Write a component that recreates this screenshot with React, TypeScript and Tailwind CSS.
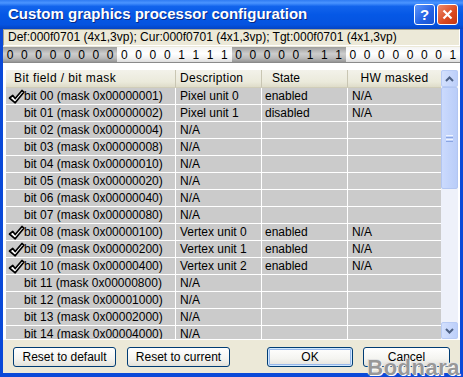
const rows = [
  { bit: "00", mask: "00000001", desc: "Pixel unit 0", state: "enabled", hw: "N/A", on: true },
  { bit: "01", mask: "00000002", desc: "Pixel unit 1", state: "disabled", hw: "N/A", on: false },
  { bit: "02", mask: "00000004", desc: "N/A", state: "", hw: "", on: false },
  { bit: "03", mask: "00000008", desc: "N/A", state: "", hw: "", on: false },
  { bit: "04", mask: "00000010", desc: "N/A", state: "", hw: "", on: false },
  { bit: "05", mask: "00000020", desc: "N/A", state: "", hw: "", on: false },
  { bit: "06", mask: "00000040", desc: "N/A", state: "", hw: "", on: false },
  { bit: "07", mask: "00000080", desc: "N/A", state: "", hw: "", on: false },
  { bit: "08", mask: "00000100", desc: "Vertex unit 0", state: "enabled", hw: "N/A", on: true },
  { bit: "09", mask: "00000200", desc: "Vertex unit 1", state: "enabled", hw: "N/A", on: true },
  { bit: "10", mask: "00000400", desc: "Vertex unit 2", state: "enabled", hw: "N/A", on: true },
  { bit: "11", mask: "00000800", desc: "N/A", state: "", hw: "", on: false },
  { bit: "12", mask: "00001000", desc: "N/A", state: "", hw: "", on: false },
  { bit: "13", mask: "00002000", desc: "N/A", state: "", hw: "", on: false },
  { bit: "14", mask: "00004000", desc: "N/A", state: "", hw: "", on: false },
];

const bits = "00000000000011110000011100000001".split("");

function Check() {
  return (
    <svg width="17" height="15" viewBox="0 0 17 15" className="shrink-0">
      <path
        d="M1.5 9 L4.8 6.5 L7.2 9.5 L14 1.5 L15.8 3.2 L7.2 13.8 Z"
        fill="#ffffff"
        stroke="#000000"
        strokeWidth="1.7"
        strokeLinejoin="round"
      />
    </svg>
  );
}

function XpButton({ label, width, isDefault }: { label: string; width: string; isDefault?: boolean }) {
  return (
    <div
      className={`${width} h-[20px] rounded-[3px] border border-[#003c74] bg-[linear-gradient(to_bottom,#ffffff_0%,#f4f4f0_60%,#e3e2da_100%)] flex items-center justify-center text-[12px] text-black ${
        isDefault ? "shadow-[inset_0_0_0_1px_#cee7ff,inset_0_0_0_2px_#98b8ea]" : ""
      }`}
    >
      {label}
    </div>
  );
}

function ScrollArrow({ up }: { up: boolean }) {
  return (
    <div className="h-[17px] w-[17px] rounded-[2px] border border-[#b8cbf5] bg-[linear-gradient(to_right,#d3e0fd,#bccffa)] flex items-center justify-center">
      <svg width="9" height="6" viewBox="0 0 9 6">
        <path
          d={up ? "M1 5 L4.5 1.5 L8 5" : "M1 1 L4.5 4.5 L8 1"}
          fill="none"
          stroke="#4d6185"
          strokeWidth="2"
        />
      </svg>
    </div>
  );
}

export default function App() {
  return (
    <div className="w-[463px] h-[377px] flex flex-col bg-[#0a49d8] font-['Liberation_Sans',Arial,sans-serif] relative overflow-hidden">
      {/* title bar */}
      <div className="h-[29px] shrink-0 flex items-center justify-between pl-[8px] pr-[5px] bg-[linear-gradient(to_bottom,#2f7bf2_0%,#4b95ff_10%,#1264ec_22%,#0558e6_50%,#0553e0_85%,#0444c4_100%)]">
        <span className="text-white font-bold text-[15px] [text-shadow:1px_1px_0_#0a2a86]">
          Custom graphics processor configuration
        </span>
        <div className="flex gap-[2px]">
          <div className="w-[21px] h-[21px] rounded-[3px] border border-white bg-[linear-gradient(135deg,#5e96fb,#2160e3_60%,#1a53d0)] flex items-center justify-center text-white font-bold text-[15px] leading-none">
            ?
          </div>
          <div className="w-[21px] h-[21px] rounded-[3px] border border-white bg-[linear-gradient(135deg,#ee8b6d,#d9481f_60%,#c43712)] flex items-center justify-center">
            <svg width="11" height="11" viewBox="0 0 11 11">
              <path d="M1.5 1.5 L9.5 9.5 M9.5 1.5 L1.5 9.5" stroke="#ffffff" strokeWidth="2.2" />
            </svg>
          </div>
        </div>
      </div>

      {/* client */}
      <div className="flex-1 mx-[3px] mb-[4px] bg-[#ece9d8] flex flex-col">
        <div className="h-[17px] shrink-0 border-t border-l border-[#a5a290] border-b border-b-white border-r border-r-white pl-[4px] text-[12px] leading-[15px] text-black whitespace-nowrap">
          Def:000f0701 (4x1,3vp); Cur:000f0701 (4x1,3vp); Tgt:000f0701 (4x1,3vp)
        </div>

        <div className="mt-[1px] h-[16px] shrink-0 grid grid-cols-32 border-b border-[#8a8a8a]">
          {bits.map((b, i) => (
            <div
              key={i}
              className={`flex items-center justify-center text-[12px] leading-none text-black ${
                Math.floor(i / 8) % 2 === 0
                  ? "bg-[linear-gradient(to_bottom,#9c9c9c_0%,#cdcdcd_45%,#b9b9b9_75%,#949494_100%)]"
                  : "bg-[linear-gradient(to_bottom,#f4f4f4_0%,#ffffff_45%,#f2f2f2_75%,#dcdcdc_100%)]"
              }`}
            >
              {b}
            </div>
          ))}
        </div>

        {/* list */}
        <div className="h-[277px] shrink-0 bg-white pt-[7px] pl-[3px] pr-[2px] pb-[1px] flex">
          <div className="w-[435px] flex flex-col overflow-hidden">
            <div className="h-[18px] shrink-0 flex bg-[linear-gradient(to_bottom,#f3f2ea,#ebeadb_70%,#dedcc9)] border-b border-[#d0cdb9] text-[12px] leading-[17px] text-black">
              <div className="w-[170px] pl-[8px] border-r border-[#c9c6b3] tracking-[0.4px]">Bit field / bit mask</div>
              <div className="w-[86px] pl-[4px] border-r border-[#c9c6b3] tracking-[0.3px]">Description</div>
              <div className="w-[86px] pl-[10px] border-r border-[#c9c6b3]">State</div>
              <div className="flex-1 text-center tracking-[0.3px]">HW masked</div>
            </div>
            {rows.map((r) => (
              <div
                key={r.bit}
                className="h-[17px] shrink-0 flex bg-[#cbcbcb] border-b border-white text-[12px] leading-[16px] text-black whitespace-nowrap"
              >
                <div className="w-[170px] flex items-center border-r border-white">
                  <div className="w-[18px] pl-[2px] flex items-center">{r.on && <Check />}</div>
                  <span>
                    bit {r.bit} (mask 0x{r.mask})
                  </span>
                </div>
                <div className="w-[86px] pl-[4px] border-r border-white">{r.desc}</div>
                <div className="w-[86px] pl-[3px] border-r border-white">{r.state}</div>
                <div className="flex-1 pl-[4px]">{r.hw}</div>
              </div>
            ))}
          </div>

          {/* scrollbar */}
          <div className="w-[17px] flex flex-col bg-[#eef1fa]">
            <ScrollArrow up />
            <div className="h-[102px] rounded-[2px] border border-[#b2c6f2] bg-[linear-gradient(to_right,#cbdafd,#b9cdf9)] flex flex-col items-center justify-center gap-[1px]">
              <div className="w-[7px] h-[1px] bg-[#eef3fe]" />
              <div className="w-[7px] h-[1px] bg-[#8aa6e4]" />
              <div className="w-[7px] h-[1px] bg-[#eef3fe]" />
              <div className="w-[7px] h-[1px] bg-[#8aa6e4]" />
            </div>
            <div className="flex-1" />
            <ScrollArrow up={false} />
          </div>
        </div>

        {/* buttons */}
        <div className="flex-1 flex items-start pt-[7px] pl-[10px] pr-[10px]">
          <XpButton label="Reset to default" width="w-[103px]" />
          <div className="w-[11px]" />
          <XpButton label="Reset to current" width="w-[103px]" />
          <div className="flex-1" />
          <XpButton label="OK" width="w-[86px]" isDefault />
          <div className="w-[10px]" />
          <XpButton label="Cancel" width="w-[87px]" />
        </div>
      </div>

      {/* watermark */}
      <div className="absolute right-[3px] bottom-[-7px] text-[22px] font-black text-[#989898] tracking-[0.5px] [text-shadow:0_0_1px_#ffffff,1px_1px_0_#ffffff,-1px_-1px_0_#e0e0e0] pointer-events-none">
        Bodnara
      </div>
    </div>
  );
}
